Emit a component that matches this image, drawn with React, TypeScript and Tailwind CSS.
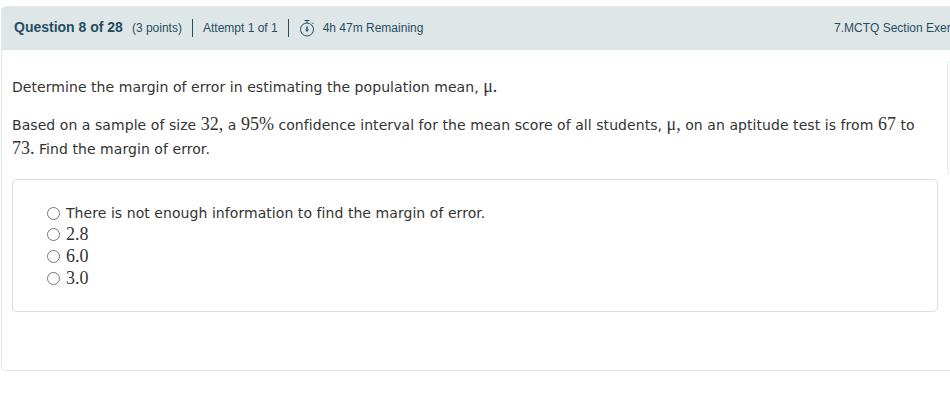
function Num({ children }: { children: string }) {
  return <span className="font-['Liberation_Serif',serif] text-[18px] tracking-normal">{children}</span>;
}

function Radio() {
  return <span className="h-[13px] w-[13px] shrink-0 rounded-full border border-[#767676] bg-white" />;
}

export default function App() {
  const options = ["2.8", "6.0", "3.0"];
  return (
    <div className="h-[414px] w-[950px] overflow-hidden bg-white pl-px pt-[6px] font-['DejaVu_Sans',sans-serif] text-[14px] tracking-[0.06px] text-[#333]">
      <div className="h-[365px] w-[1000px] rounded-l-[5px] border border-r-0 border-[#e4e8ea]">
        <header className="flex h-[43px] items-center justify-between rounded-tl-[4px] bg-[#dfe6e8] pb-[2px] pl-[12px] font-['Liberation_Sans',sans-serif] text-[12px] tracking-normal text-[#1f4e63]">
          <div className="flex items-center">
            <span className="text-[14px] font-bold">Question 8 of 28</span>
            <span className="ml-[9px]">(3 points)</span>
            <span className="ml-[10px] mr-[10px] h-[18px] w-px bg-[#1f4e63]" />
            <span>Attempt 1 of 1</span>
            <span className="mx-[10px] h-[18px] w-px bg-[#1f4e63]" />
            <svg width="16" height="18" viewBox="0 0 16 18" fill="none" stroke="#1f4e63" strokeWidth="1" className="mr-[8px]">
              <circle cx="8" cy="10.5" r="6.5" />
              <path d="M5.5 1.5h5M8 1.5v2.5M13 3.5l1.5 1.5" />
              <path d="M8 7.5v4" strokeWidth="1.5" />
              <path d="M6.5 10.5L8 12.5l1.5-2" />
            </svg>
            <span>4h 47m Remaining</span>
          </div>
          <span className="mr-[50px] w-[117px] whitespace-nowrap">7.MCTQ Section Exer</span>
        </header>
        <div className="flex">
          <main className="w-[945px] shrink-0 pl-[10px]">
            <p className="mt-[26px] leading-[20px]">
              Determine the margin of error in estimating the population mean, <Num>μ.</Num>
            </p>
            <p className="mt-[16px] w-[925px] leading-[23px]">
              Based on a sample of size <Num>32,</Num> a <Num>95%</Num> confidence interval for the mean score of all students, <Num>μ,</Num> on an aptitude test is from <Num>67</Num> to <Num>73.</Num> Find the margin of error.
            </p>
            <section className="mt-[18px] flex h-[133px] w-[926px] flex-col rounded-[5px] border border-[#d3dfe0] pl-[34px] pt-[23px]">
              <label className="flex h-[20px] items-center gap-[6px]">
                <Radio />
                <span>There is not enough information to find the margin of error.</span>
              </label>
              {options.map((o) => (
                <label key={o} className="flex h-[22px] items-center gap-[6px]">
                  <Radio />
                  <Num>{o}</Num>
                </label>
              ))}
            </section>
          </main>
          <aside className="mt-[10px] h-[115px] w-[50px] rounded-l-[5px] border border-r-0 border-[#e4e8ea]" />
        </div>
      </div>
    </div>
  );
}
